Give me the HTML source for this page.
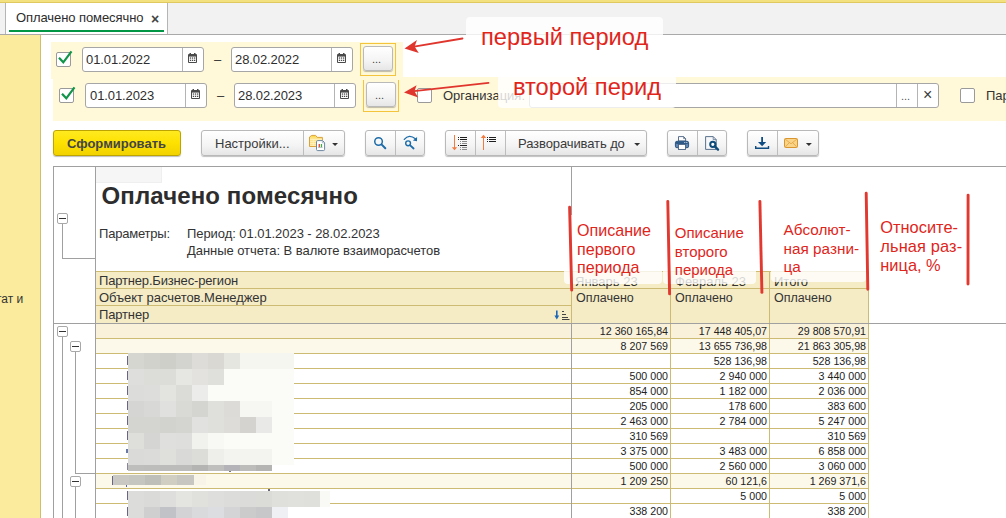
<!DOCTYPE html>
<html lang="ru">
<head>
<meta charset="utf-8">
<title>Оплачено помесячно</title>
<style>
*{box-sizing:border-box;margin:0;padding:0}
html,body{width:1006px;height:518px;overflow:hidden;background:#fff}
body{font-family:"Liberation Sans",sans-serif;font-size:13px;color:#333;position:relative}
.abs{position:absolute}
.t{position:absolute;white-space:nowrap;line-height:1}
/* top */
#topstrip{left:0;top:0;width:1006px;height:3px;background:#f3e07f;border-bottom:1px solid #e0c95e}
#tabbar{left:0;top:3px;width:1006px;height:32px;background:#f2f2f2;border-bottom:1px solid #a9a9a9}
#tab{left:5px;top:3px;width:163px;height:31px;background:#fff;border-left:1px solid #b5b5b5;border-right:1px solid #b5b5b5}
#tabline{left:9px;top:30px;width:155px;height:2px;background:#009646}
#sidebar{left:0;top:35px;width:41px;height:483px;background:#fbeb9d;border-right:1px solid #cfbf6c}
/* inputs */
.inp{position:absolute;height:25px;background:#fff;border:1px solid #a6a6a6;border-radius:3px}
.inp .sep{position:absolute;top:0;bottom:0;width:1px;background:#b4b4b4}
.chk{position:absolute;width:15px;height:15px;background:#fff;border:1px solid #9a9a9a;border-radius:2px}
.btn{position:absolute;height:26px;border:1px solid #b9b9b9;border-radius:3px;background:linear-gradient(#ffffff,#f4f4f4 60%,#e6e6e6);box-shadow:0 1px 1px rgba(0,0,0,.25)}
.btn .sep{position:absolute;top:0;bottom:0;width:1px;background:#bdbdbd}
.red{color:#e0251b}
/* report */
.hl{position:absolute;height:1px;background:#a0a0a0}
.vl{position:absolute;width:1px;background:#a0a0a0}
.num{position:absolute;font-size:10.67px;line-height:1;text-align:right;white-space:nowrap;color:#222}
</style>
</head>
<body>
<div id="topstrip" class="abs"></div>
<div id="tabbar" class="abs"></div>
<div id="tab" class="abs"></div>
<div id="tabline" class="abs"></div>
<div class="t" style="left:16px;top:11px;font-size:13px;color:#2c2c2c;letter-spacing:-0.08px">Оплачено помесячно</div>
<div class="t" style="left:151px;top:12px;font-size:14px;font-weight:bold;color:#444">×</div>
<div id="sidebar" class="abs"></div>
<div class="t" style="left:-4px;top:293px;font-size:12px;color:#333">тат и</div>

<!-- FILTERS -->
<div class="abs" style="left:53px;top:77px;width:953px;height:44px;background:#fff8d9"></div>
<div class="abs" style="left:403px;top:35px;width:603px;height:42px;background:#fff"></div>
<div class="abs" style="left:51px;top:42px;width:352px;height:37px;background:#fff8d9"></div>
<div class="chk" style="left:56px;top:52px"></div><svg class="abs" style="left:56px;top:49px" width="18" height="16" viewBox="0 0 18 16"><path d="M3 8.7 L7.3 13.3 L15.5 2.4" fill="none" stroke="#10954a" stroke-width="2.2" stroke-linejoin="miter"/></svg>
<div class="inp" style="left:82px;top:47px;width:122px"><div class="sep" style="left:99px"></div></div>
<div class="t" style="left:86px;top:53px;font-size:13px;letter-spacing:-0.1px;color:#2e2e2e">01.01.2022</div>
<svg class="abs" style="left:188px;top:53px" width="9" height="10" viewBox="0 0 9 10"><rect x="0" y="1" width="9" height="9" rx="1" fill="#4a4a4a"/><rect x="1.5" y="0" width="1.5" height="2.2" fill="#4a4a4a"/><rect x="6" y="0" width="1.5" height="2.2" fill="#4a4a4a"/><rect x="1" y="3.6" width="7" height="5.4" fill="#fff"/><g fill="#4a4a4a"><rect x="1.8" y="4.4" width="1.3" height="1.3"/><rect x="3.9" y="4.4" width="1.3" height="1.3"/><rect x="6" y="4.4" width="1.3" height="1.3"/><rect x="1.8" y="6.7" width="1.3" height="1.3"/><rect x="3.9" y="6.7" width="1.3" height="1.3"/><rect x="6" y="6.7" width="1.3" height="1.3"/></g></svg>
<div class="t" style="left:214px;top:53px;font-size:13px">–</div>
<div class="inp" style="left:231px;top:47px;width:122px"><div class="sep" style="left:99px"></div></div>
<div class="t" style="left:235px;top:53px;font-size:13px;letter-spacing:-0.1px;color:#2e2e2e">28.02.2022</div>
<svg class="abs" style="left:337px;top:53px" width="9" height="10" viewBox="0 0 9 10"><rect x="0" y="1" width="9" height="9" rx="1" fill="#4a4a4a"/><rect x="1.5" y="0" width="1.5" height="2.2" fill="#4a4a4a"/><rect x="6" y="0" width="1.5" height="2.2" fill="#4a4a4a"/><rect x="1" y="3.6" width="7" height="5.4" fill="#fff"/><g fill="#4a4a4a"><rect x="1.8" y="4.4" width="1.3" height="1.3"/><rect x="3.9" y="4.4" width="1.3" height="1.3"/><rect x="6" y="4.4" width="1.3" height="1.3"/><rect x="1.8" y="6.7" width="1.3" height="1.3"/><rect x="3.9" y="6.7" width="1.3" height="1.3"/><rect x="6" y="6.7" width="1.3" height="1.3"/></g></svg>
<div class="abs" style="left:360px;top:43px;width:36px;height:33px;border:1px solid #f3c43c"></div>
<div class="btn" style="left:363px;top:46px;width:30px;height:25px"></div>
<div class="t" style="left:372px;top:54px;font-size:11px;color:#444">...</div>
<div class="chk" style="left:59px;top:88px"></div><svg class="abs" style="left:59px;top:85px" width="18" height="16" viewBox="0 0 18 16"><path d="M3 8.7 L7.3 13.3 L15.5 2.4" fill="none" stroke="#10954a" stroke-width="2.2" stroke-linejoin="miter"/></svg>
<div class="inp" style="left:85px;top:83px;width:122px"><div class="sep" style="left:99px"></div></div>
<div class="t" style="left:90px;top:89px;font-size:13px;letter-spacing:-0.1px;color:#2e2e2e">01.01.2023</div>
<svg class="abs" style="left:191px;top:89px" width="9" height="10" viewBox="0 0 9 10"><rect x="0" y="1" width="9" height="9" rx="1" fill="#4a4a4a"/><rect x="1.5" y="0" width="1.5" height="2.2" fill="#4a4a4a"/><rect x="6" y="0" width="1.5" height="2.2" fill="#4a4a4a"/><rect x="1" y="3.6" width="7" height="5.4" fill="#fff"/><g fill="#4a4a4a"><rect x="1.8" y="4.4" width="1.3" height="1.3"/><rect x="3.9" y="4.4" width="1.3" height="1.3"/><rect x="6" y="4.4" width="1.3" height="1.3"/><rect x="1.8" y="6.7" width="1.3" height="1.3"/><rect x="3.9" y="6.7" width="1.3" height="1.3"/><rect x="6" y="6.7" width="1.3" height="1.3"/></g></svg>
<div class="t" style="left:217px;top:89px;font-size:13px">–</div>
<div class="inp" style="left:234px;top:83px;width:122px"><div class="sep" style="left:99px"></div></div>
<div class="t" style="left:238px;top:89px;font-size:13px;letter-spacing:-0.1px;color:#2e2e2e">28.02.2023</div>
<svg class="abs" style="left:340px;top:89px" width="9" height="10" viewBox="0 0 9 10"><rect x="0" y="1" width="9" height="9" rx="1" fill="#4a4a4a"/><rect x="1.5" y="0" width="1.5" height="2.2" fill="#4a4a4a"/><rect x="6" y="0" width="1.5" height="2.2" fill="#4a4a4a"/><rect x="1" y="3.6" width="7" height="5.4" fill="#fff"/><g fill="#4a4a4a"><rect x="1.8" y="4.4" width="1.3" height="1.3"/><rect x="3.9" y="4.4" width="1.3" height="1.3"/><rect x="6" y="4.4" width="1.3" height="1.3"/><rect x="1.8" y="6.7" width="1.3" height="1.3"/><rect x="3.9" y="6.7" width="1.3" height="1.3"/><rect x="6" y="6.7" width="1.3" height="1.3"/></g></svg>
<div class="abs" style="left:363px;top:80px;width:36px;height:32px;border:1px solid #f3c43c;border-top:none"></div>
<div class="btn" style="left:366px;top:82px;width:30px;height:25px"></div>
<div class="t" style="left:375px;top:90px;font-size:11px;color:#444">...</div>
<div class="chk" style="left:417px;top:88px"></div>
<div class="t" style="left:443px;top:89px;font-size:13px">Организация:</div>
<div class="inp" style="left:529px;top:83px;width:410px"><div class="sep" style="left:366px"></div><div class="sep" style="left:387px"></div></div>
<div class="t" style="left:901px;top:91px;font-size:11px;color:#555">...</div>
<div class="t" style="left:923px;top:87px;font-size:16px;color:#3c3c3c">×</div>
<div class="chk" style="left:960px;top:88px"></div>
<div class="t" style="left:986px;top:89px;font-size:13px">Пар</div>

<!-- TOOLBAR -->
<div class="abs" style="left:53px;top:130px;width:128px;height:26px;border:1px solid #bda400;border-radius:3px;background:linear-gradient(#ffea20,#fde100 50%,#f2d200);box-shadow:0 1px 1px rgba(0,0,0,.25)"></div>
<div class="t" style="left:67px;top:137px;font-size:13px;font-weight:bold;color:#454545">Сформировать</div>
<div class="btn" style="left:201px;top:130px;width:144px"><div class="sep" style="left:101px"></div></div>
<div class="t" style="left:215px;top:137px;font-size:13px;color:#3a3a3a">Настройки...</div>
<div class="btn" style="left:365px;top:130px;width:60px"><div class="sep" style="left:29px"></div></div>
<div class="btn" style="left:445px;top:130px;width:202px"><div class="sep" style="left:29px"></div><div class="sep" style="left:59px"></div></div>
<div class="t" style="left:518px;top:137px;font-size:13px;color:#3a3a3a;letter-spacing:-0.1px">Разворачивать до</div>
<div class="btn" style="left:667px;top:130px;width:60px"><div class="sep" style="left:29px"></div></div>
<div class="btn" style="left:747px;top:130px;width:72px"><div class="sep" style="left:29px"></div></div>
<svg class="abs" style="left:0;top:0" width="1006" height="518" viewBox="0 0 1006 518">
<!-- folder + doc -->
<path d="M309.5 146.5 L309.5 137 L311.9 135.4 L315.6 135.4 L317.2 137.4 L322.4 137.4 L322.4 146.5 Z" fill="#fde38c" stroke="#dba13a" stroke-width="1"/>
<path d="M310.3 137.2 L312.1 136 L315.3 136 L316.4 137.6 Z" fill="#fbdc4e"/>
<g stroke="#fff3c4" stroke-width="0.7"><path d="M310.2 139.5H322M310.2 141.5H322M310.2 143.5H322M310.2 145.3H322"/><path d="M313.3 139V146" /></g>
<path d="M316.5 141.8 Q316.5 140.6 317.7 140.6 L322.6 140.6 L324.6 142.6 L324.6 149.4 Q324.6 150.6 323.4 150.6 L317.7 150.6 Q316.5 150.6 316.5 149.4 Z" fill="#fff" stroke="#6c879e" stroke-width="1"/>
<path d="M322.4 140.8 L322.4 142.8 L324.4 142.8" fill="none" stroke="#8fa5b8" stroke-width="0.7"/>
<rect x="318.6" y="144" width="1.3" height="3.3" fill="#f0382c"/><rect x="320.8" y="144" width="1.3" height="3.3" fill="#36b24a"/>
<rect x="318" y="147.3" width="4.6" height="0.6" fill="#9aa"/>
<!-- dropdown arrows -->
<path d="M332.1 143 L338 143 L335.05 145.9 Z" fill="#333"/>
<path d="M634.2 143 L640.1 143 L637.15 145.9 Z" fill="#333"/>
<path d="M805.9 143 L811.9 143 L808.9 146 Z" fill="#333"/>
<!-- magnifier -->
<circle cx="378.55" cy="141.5" r="3.8" fill="none" stroke="#1d6ca8" stroke-width="1.5"/>
<path d="M381.5 144.4 L385.3 148.2" stroke="#1d6ca8" stroke-width="2" stroke-linecap="round"/>
<!-- magnifier w/ arrow -->
<circle cx="408.1" cy="143.3" r="2.4" fill="none" stroke="#1d6ca8" stroke-width="1.4"/>
<path d="M410.2 145.3 L413.6 148.5" stroke="#1d6ca8" stroke-width="1.8" stroke-linecap="round"/>
<path d="M404.3 139.4 Q409 133.6 415.4 138.8" fill="none" stroke="#1d6ca8" stroke-width="1.3" stroke-linecap="round"/>
<path d="M417.1 137 L417 141.2 L412.9 140.5 Z" fill="#1d6ca8"/>
<!-- expand/collapse -->
<g shape-rendering="crispEdges">
<rect x="454" y="135" width="1" height="13" fill="#f47b3f"/>
<rect x="483" y="137" width="1" height="13" fill="#f47b3f"/>
<g fill="#1e1e1e"><rect x="458" y="137" width="1" height="1"/><rect x="460" y="137" width="7" height="1"/><rect x="458" y="139" width="1" height="1"/><rect x="460" y="139" width="7" height="1"/><rect x="458" y="145" width="1" height="1"/><rect x="460" y="145" width="7" height="1"/>
<rect x="487" y="137" width="1" height="1"/><rect x="489" y="137" width="7" height="1"/><rect x="487" y="139" width="1" height="1"/><rect x="489" y="139" width="7" height="1"/><rect x="487" y="141" width="1" height="1"/><rect x="489" y="141" width="7" height="1"/></g>
<g fill="#8c8c8c"><rect x="460" y="141" width="1" height="1"/><rect x="462" y="141" width="5" height="1"/><rect x="460" y="143" width="1" height="1"/><rect x="462" y="143" width="5" height="1"/><rect x="460" y="147" width="1" height="1"/><rect x="462" y="147" width="5" height="1"/><rect x="460" y="149" width="1" height="1"/><rect x="462" y="149" width="5" height="1"/></g>
</g>
<path d="M451.8 147.2 L457.2 147.2 L454.5 150.2 Z" fill="#f47b3f"/>
<path d="M480.8 138 L486.2 138 L483.5 134.8 Z" fill="#f47b3f"/>
<!-- printer -->
<path d="M678.5 141 L678.5 136.6 L683.6 136.6 L685.6 138.6 L685.6 141 Z" fill="#fff" stroke="#46607e" stroke-width="0.9"/>
<path d="M683.6 136.6 L683.6 138.6 L685.6 138.6" fill="none" stroke="#46607e" stroke-width="0.7"/>
<rect x="675.4" y="141.3" width="13.2" height="6.4" rx="1.5" fill="#5f88b6" stroke="#204b77" stroke-width="0.9"/>
<rect x="675.9" y="141.7" width="12.2" height="2.2" rx="1" fill="#2e5a88"/>
<rect x="684.3" y="142" width="1" height="0.9" fill="#e8f0f8"/><rect x="686.3" y="142" width="1" height="0.9" fill="#e8f0f8"/>
<rect x="678.5" y="144.4" width="7" height="5.1" fill="#fff" stroke="#46607e" stroke-width="0.9"/>
<!-- preview -->
<path d="M705.6 136.6 L713.2 136.6 L716.2 139.6 L716.2 149.4 L705.6 149.4 Z" fill="#f6f8fa" stroke="#4a6482" stroke-width="0.9"/>
<path d="M713.2 136.6 L713.2 139.6 L716.2 139.6" fill="none" stroke="#4a6482" stroke-width="0.7"/>
<circle cx="712.8" cy="144.3" r="2.6" fill="#fff" stroke="#0e4c7a" stroke-width="2"/>
<path d="M715 146.6 L718 149.6" stroke="#0e4c7a" stroke-width="2.4" stroke-linecap="round"/>
<!-- download -->
<path d="M762.1 137.1 L762.1 143" stroke="#0f4c81" stroke-width="1.8"/>
<path d="M758 142.1 L766.2 142.1 L762.1 146.2 Z" fill="#0f4c81"/>
<path d="M755.7 146.1 L755.7 148.2 L768.5 148.2 L768.5 146.1" fill="none" stroke="#0f4c81" stroke-width="1.4"/>
<!-- envelope -->
<rect x="784.5" y="138.5" width="13" height="9" rx="1" fill="#fad489" stroke="#d9962e" stroke-width="1"/>
<path d="M785 139 L791 143.8 L797 139 M785.2 147 L789.4 142.6 M796.8 147 L792.6 142.6" fill="none" stroke="#e0a242" stroke-width="0.8"/>
</svg>
<!-- REPORT -->
<div class="abs" style="left:96px;top:271px;width:773px;height:52px;background:#f5ecc6"></div>
<div class="abs" style="left:96px;top:324px;width:773px;height:14px;background:#f9f1d9"></div>
<div class="abs" style="left:96px;top:339px;width:773px;height:14px;background:#fdf9ea"></div>
<div class="abs" style="left:96px;top:474px;width:773px;height:14px;background:#fdf9ea"></div>
<div class="abs" style="left:96px;top:271px;width:773px;height:1px;background:#cdbb73"></div>
<div class="abs" style="left:96px;top:288px;width:773px;height:1px;background:#cdbb73"></div>
<div class="abs" style="left:96px;top:305px;width:475px;height:1px;background:#cdbb73"></div>
<div class="abs" style="left:96px;top:338px;width:773px;height:1px;background:#cdbb73"></div>
<div class="abs" style="left:96px;top:353px;width:773px;height:1px;background:#cdbb73"></div>
<div class="abs" style="left:96px;top:368px;width:773px;height:1px;background:#cdbb73"></div>
<div class="abs" style="left:96px;top:383px;width:773px;height:1px;background:#cdbb73"></div>
<div class="abs" style="left:96px;top:398px;width:773px;height:1px;background:#cdbb73"></div>
<div class="abs" style="left:96px;top:413px;width:773px;height:1px;background:#cdbb73"></div>
<div class="abs" style="left:96px;top:428px;width:773px;height:1px;background:#cdbb73"></div>
<div class="abs" style="left:96px;top:443px;width:773px;height:1px;background:#cdbb73"></div>
<div class="abs" style="left:96px;top:458px;width:773px;height:1px;background:#cdbb73"></div>
<div class="abs" style="left:96px;top:473px;width:773px;height:1px;background:#cdbb73"></div>
<div class="abs" style="left:96px;top:488px;width:773px;height:1px;background:#cdbb73"></div>
<div class="abs" style="left:96px;top:503px;width:773px;height:1px;background:#cdbb73"></div>
<div class="abs" style="left:571px;top:271px;width:1px;height:247px;background:#cdbb73"></div>
<div class="abs" style="left:670px;top:271px;width:1px;height:247px;background:#cdbb73"></div>
<div class="abs" style="left:769px;top:271px;width:1px;height:247px;background:#cdbb73"></div>
<div class="abs" style="left:868px;top:271px;width:1px;height:247px;background:#cdbb73"></div>
<div class="hl" style="left:53px;top:166px;width:953px"></div>
<div class="vl" style="left:53px;top:166px;height:352px"></div>
<div class="vl" style="left:95px;top:166px;height:352px"></div>
<div class="vl" style="left:571px;top:166px;height:105px"></div>
<div class="vl" style="left:571px;top:323px;height:195px"></div>
<div class="hl" style="left:53px;top:323px;width:953px"></div>
<div class="abs" style="left:96px;top:167px;width:66px;height:16px;background:#f6f6f6;border-bottom:1px solid #efefef;border-right:1px solid #efefef"></div>
<div class="t" style="left:101.5px;top:184px;font-size:24px;font-weight:bold;color:#2d2d2d;letter-spacing:0.12px">Оплачено помесячно</div>
<div class="t" style="left:99px;top:227px;font-size:13px;color:#333;letter-spacing:-0.2px">Параметры:</div>
<div class="t" style="left:187px;top:227px;font-size:13px;color:#333;letter-spacing:-0.06px">Период: 01.01.2023 - 28.02.2023</div>
<div class="t" style="left:187px;top:244px;font-size:13px;color:#333;letter-spacing:-0.05px">Данные отчета: В валюте взаиморасчетов</div>
<div class="t" style="left:99px;top:274px;font-size:13px;color:#333;letter-spacing:-0.17px">Партнер.Бизнес-регион</div>
<div class="t" style="left:99px;top:291px;font-size:13px;color:#333;letter-spacing:-0.05px">Объект расчетов.Менеджер</div>
<div class="t" style="left:99px;top:308px;font-size:13px;color:#333;letter-spacing:-0.15px">Партнер</div>
<div class="t" style="left:575px;top:275px;font-size:13px;color:#333">Январь 23</div>
<div class="t" style="left:675px;top:275px;font-size:13px;color:#333">Февраль 23</div>
<div class="t" style="left:774px;top:275px;font-size:13px;color:#333">Итого</div>
<div class="t" style="left:576px;top:292px;font-size:12.5px;color:#333">Оплачено</div>
<div class="t" style="left:675px;top:292px;font-size:12.5px;color:#333">Оплачено</div>
<div class="t" style="left:774px;top:292px;font-size:12.5px;color:#333">Оплачено</div>
<svg class="abs" style="left:554px;top:310px" width="17" height="11" viewBox="0 0 17 11"><path d="M2.8 0.5 L2.8 7" stroke="#1a66b8" stroke-width="1.6"/><path d="M0.4 5.6 L5.2 5.6 L2.8 9.6 Z" fill="#1a66b8"/><g fill="#444"><rect x="8" y="1" width="2" height="1"/><rect x="8" y="4" width="4" height="1"/><rect x="8" y="7" width="6" height="1"/><rect x="8" y="9" width="7.5" height="1"/></g></svg>
<div class="vl" style="left:62px;top:224px;height:34px"></div>
<div class="hl" style="left:62px;top:258px;width:33px"></div>
<div class="abs" style="left:57px;top:213px;width:11px;height:11px;border:1px solid #a8a8a8;border-radius:2px;background:#fff"></div><div class="abs" style="left:59px;top:218px;width:7px;height:1px;background:#333"></div>
<div class="vl" style="left:62px;top:337px;height:181px"></div>
<div class="abs" style="left:57px;top:326px;width:11px;height:11px;border:1px solid #a8a8a8;border-radius:2px;background:#fff"></div><div class="abs" style="left:59px;top:331px;width:7px;height:1px;background:#333"></div>
<div class="vl" style="left:75px;top:352px;height:122px"></div>
<div class="hl" style="left:75px;top:473px;width:20px"></div>
<div class="abs" style="left:70px;top:341px;width:11px;height:11px;border:1px solid #a8a8a8;border-radius:2px;background:#fff"></div><div class="abs" style="left:72px;top:346px;width:7px;height:1px;background:#333"></div>
<div class="vl" style="left:75px;top:487px;height:31px"></div>
<div class="abs" style="left:70px;top:476px;width:11px;height:11px;border:1px solid #a8a8a8;border-radius:2px;background:#fff"></div><div class="abs" style="left:72px;top:481px;width:7px;height:1px;background:#333"></div>
<div class="num" style="left:573px;top:326px;width:95px">12 360 165,84</div>
<div class="num" style="left:672px;top:326px;width:95px">17 448 405,07</div>
<div class="num" style="left:771px;top:326px;width:95px">29 808 570,91</div>
<div class="num" style="left:573px;top:341px;width:95px">8 207 569</div>
<div class="num" style="left:672px;top:341px;width:95px">13 655 736,98</div>
<div class="num" style="left:771px;top:341px;width:95px">21 863 305,98</div>
<div class="num" style="left:672px;top:356px;width:95px">528 136,98</div>
<div class="num" style="left:771px;top:356px;width:95px">528 136,98</div>
<div class="num" style="left:573px;top:371px;width:95px">500 000</div>
<div class="num" style="left:672px;top:371px;width:95px">2 940 000</div>
<div class="num" style="left:771px;top:371px;width:95px">3 440 000</div>
<div class="num" style="left:573px;top:386px;width:95px">854 000</div>
<div class="num" style="left:672px;top:386px;width:95px">1 182 000</div>
<div class="num" style="left:771px;top:386px;width:95px">2 036 000</div>
<div class="num" style="left:573px;top:401px;width:95px">205 000</div>
<div class="num" style="left:672px;top:401px;width:95px">178 600</div>
<div class="num" style="left:771px;top:401px;width:95px">383 600</div>
<div class="num" style="left:573px;top:416px;width:95px">2 463 000</div>
<div class="num" style="left:672px;top:416px;width:95px">2 784 000</div>
<div class="num" style="left:771px;top:416px;width:95px">5 247 000</div>
<div class="num" style="left:573px;top:431px;width:95px">310 569</div>
<div class="num" style="left:771px;top:431px;width:95px">310 569</div>
<div class="num" style="left:573px;top:446px;width:95px">3 375 000</div>
<div class="num" style="left:672px;top:446px;width:95px">3 483 000</div>
<div class="num" style="left:771px;top:446px;width:95px">6 858 000</div>
<div class="num" style="left:573px;top:461px;width:95px">500 000</div>
<div class="num" style="left:672px;top:461px;width:95px">2 560 000</div>
<div class="num" style="left:771px;top:461px;width:95px">3 060 000</div>
<div class="num" style="left:573px;top:476px;width:95px">1 209 250</div>
<div class="num" style="left:672px;top:476px;width:95px">60 121,6</div>
<div class="num" style="left:771px;top:476px;width:95px">1 269 371,6</div>
<div class="num" style="left:672px;top:491px;width:95px">5 000</div>
<div class="num" style="left:771px;top:491px;width:95px">5 000</div>
<div class="num" style="left:573px;top:506px;width:95px">338 200</div>
<div class="num" style="left:771px;top:506px;width:95px">338 200</div>
<!-- MOSAIC -->
<div class="abs" style="left:126px;top:356px;width:1px;height:9px;background:#6a6485;margin-left:1px"></div>
<div class="abs" style="left:126px;top:371px;width:1px;height:9px;background:#6a6485;margin-left:1px"></div>
<div class="abs" style="left:126px;top:386px;width:1px;height:9px;background:#6a6485;margin-left:1px"></div>
<div class="abs" style="left:126px;top:401px;width:1px;height:9px;background:#6a6485;margin-left:1px"></div>
<div class="abs" style="left:126px;top:416px;width:1px;height:9px;background:#6a6485;margin-left:1px"></div>
<div class="abs" style="left:126px;top:431px;width:1px;height:9px;background:#6a6485;margin-left:1px"></div>
<div class="abs" style="left:126px;top:449px;width:2px;height:4px;background:#6a78a8"></div>
<div class="abs" style="left:127px;top:463px;width:1px;height:7px;background:#8a86a0"></div><div class="abs" style="left:126px;top:485px;width:1px;height:2px;background:#5566aa"></div>
<div class="abs" style="left:126px;top:491px;width:1px;height:9px;background:#6a6485;margin-left:1px"></div>
<div class="abs" style="left:126px;top:507px;width:1px;height:9px;background:#6a6485;margin-left:1px"></div>
<div class="abs" style="left:111px;top:476px;width:1px;height:9px;background:#6a6485;margin-left:1px"></div>
<div class="abs" style="left:229px;top:470px;width:2px;height:2px;background:#777"></div>
<div class="abs" style="left:268px;top:489px;width:2px;height:2px;background:#667"></div>
<svg class="abs" style="left:128px;top:353px" width="166" height="118" viewBox="0 0 166 118" shape-rendering="crispEdges"><rect x="0" y="0" width="16" height="16" fill="#d6d6d1"/><rect x="16" y="0" width="16" height="16" fill="#d2d2cd"/><rect x="32" y="0" width="16" height="16" fill="#cfcfca"/><rect x="48" y="0" width="16" height="16" fill="#d3d3cf"/><rect x="64" y="0" width="16" height="16" fill="#dddcd8"/><rect x="80" y="0" width="16" height="16" fill="#dad8d3"/><rect x="96" y="0" width="16" height="16" fill="#e6e6e1"/><rect x="112" y="0" width="16" height="16" fill="#f6f6f0"/><rect x="128" y="0" width="16" height="16" fill="#f6f6f0"/><rect x="144" y="0" width="16" height="16" fill="#f6f6f0"/><rect x="160" y="0" width="6" height="16" fill="#f6f6f0"/><rect x="0" y="16" width="16" height="16" fill="#dedfdc"/><rect x="16" y="16" width="16" height="16" fill="#dcdcd9"/><rect x="32" y="16" width="16" height="16" fill="#dcdcd8"/><rect x="48" y="16" width="16" height="16" fill="#e6e7e3"/><rect x="64" y="16" width="16" height="16" fill="#e4e2de"/><rect x="80" y="16" width="16" height="16" fill="#dfdfdb"/><rect x="96" y="16" width="16" height="16" fill="#fbfcf8"/><rect x="112" y="16" width="16" height="16" fill="#fbfcf8"/><rect x="128" y="16" width="16" height="16" fill="#fbfcf8"/><rect x="144" y="16" width="16" height="16" fill="#fbfcf8"/><rect x="160" y="16" width="6" height="16" fill="#fbfcf8"/><rect x="0" y="32" width="16" height="16" fill="#dcdddb"/><rect x="16" y="32" width="16" height="16" fill="#dddedb"/><rect x="32" y="32" width="16" height="16" fill="#e3e3df"/><rect x="48" y="32" width="16" height="16" fill="#dbdbd8"/><rect x="64" y="32" width="16" height="16" fill="#ececea"/><rect x="80" y="32" width="16" height="16" fill="#fbfcf8"/><rect x="96" y="32" width="16" height="16" fill="#fbfcf8"/><rect x="112" y="32" width="16" height="16" fill="#fbfcf8"/><rect x="128" y="32" width="16" height="16" fill="#fbfcf8"/><rect x="144" y="32" width="16" height="16" fill="#fbfcf8"/><rect x="160" y="32" width="6" height="16" fill="#fbfcf8"/><rect x="0" y="48" width="16" height="16" fill="#d5d6d3"/><rect x="16" y="48" width="16" height="16" fill="#d8d9d6"/><rect x="32" y="48" width="16" height="16" fill="#e0e1de"/><rect x="48" y="48" width="16" height="16" fill="#d9dad6"/><rect x="64" y="48" width="16" height="16" fill="#d4d5d1"/><rect x="80" y="48" width="16" height="16" fill="#dfdfdb"/><rect x="96" y="48" width="16" height="16" fill="#dcdbd7"/><rect x="112" y="48" width="16" height="16" fill="#f6f7f3"/><rect x="128" y="48" width="16" height="16" fill="#f6f7f3"/><rect x="144" y="48" width="16" height="16" fill="#fbfcf8"/><rect x="160" y="48" width="6" height="16" fill="#fbfcf8"/><rect x="0" y="64" width="16" height="16" fill="#d4d4d1"/><rect x="16" y="64" width="16" height="16" fill="#d4d4d1"/><rect x="32" y="64" width="16" height="16" fill="#d2d2ce"/><rect x="48" y="64" width="16" height="16" fill="#d4d5d1"/><rect x="64" y="64" width="16" height="16" fill="#e1e2df"/><rect x="80" y="64" width="16" height="16" fill="#dfe0dc"/><rect x="96" y="64" width="16" height="16" fill="#dddcd8"/><rect x="112" y="64" width="16" height="16" fill="#d4d3d0"/><rect x="128" y="64" width="16" height="16" fill="#e9e9e7"/><rect x="144" y="64" width="16" height="16" fill="#fbfcf8"/><rect x="160" y="64" width="6" height="16" fill="#fbfcf8"/><rect x="0" y="80" width="16" height="16" fill="#dedfdb"/><rect x="16" y="80" width="16" height="16" fill="#d5d6d4"/><rect x="32" y="80" width="16" height="16" fill="#dfe0dd"/><rect x="48" y="80" width="16" height="16" fill="#dedfdc"/><rect x="64" y="80" width="16" height="16" fill="#f1f1ed"/><rect x="80" y="80" width="16" height="16" fill="#f8f9f5"/><rect x="96" y="80" width="16" height="16" fill="#fbfcf8"/><rect x="112" y="80" width="16" height="16" fill="#fbfcf8"/><rect x="128" y="80" width="16" height="16" fill="#fbfcf8"/><rect x="144" y="80" width="16" height="16" fill="#fbfcf8"/><rect x="160" y="80" width="6" height="16" fill="#fbfcf8"/><rect x="0" y="96" width="16" height="16" fill="#dadbd8"/><rect x="16" y="96" width="16" height="16" fill="#dbdcd9"/><rect x="32" y="96" width="16" height="16" fill="#dfe0dc"/><rect x="48" y="96" width="16" height="16" fill="#d9dad8"/><rect x="64" y="96" width="16" height="16" fill="#dcddd9"/><rect x="80" y="96" width="16" height="16" fill="#eeefeb"/><rect x="96" y="96" width="16" height="16" fill="#f3f4f0"/><rect x="112" y="96" width="16" height="16" fill="#f3f4f0"/><rect x="128" y="96" width="16" height="16" fill="#f3f4f0"/><rect x="144" y="96" width="16" height="16" fill="#fbfcf8"/><rect x="160" y="96" width="6" height="16" fill="#fbfcf8"/><rect x="0" y="112" width="16" height="6" fill="#bebebc"/><rect x="16" y="112" width="16" height="6" fill="#bdbdbb"/><rect x="32" y="112" width="16" height="6" fill="#bcbcbb"/><rect x="48" y="112" width="16" height="6" fill="#bcbcba"/><rect x="64" y="112" width="16" height="6" fill="#b4b4b2"/><rect x="80" y="112" width="16" height="6" fill="#bfbfbd"/><rect x="96" y="112" width="16" height="6" fill="#b4b3b8"/><rect x="112" y="112" width="16" height="6" fill="#bcbcba"/><rect x="128" y="112" width="16" height="6" fill="#b4b4b2"/></svg>
<svg class="abs" style="left:113px;top:475px" width="93" height="10" viewBox="0 0 93 10" shape-rendering="crispEdges"><rect x="0" y="0" width="16" height="10" fill="#c9c8c3"/><rect x="16" y="0" width="16" height="10" fill="#c6c6c1"/><rect x="32" y="0" width="16" height="10" fill="#bfbfb9"/><rect x="48" y="0" width="16" height="10" fill="#d0cdc3"/><rect x="64" y="0" width="17" height="10" fill="#c7c6c0"/><rect x="81" y="0" width="12" height="10" fill="#f8f5e8"/></svg>
<svg class="abs" style="left:128px;top:491px" width="202" height="16" viewBox="0 0 202 16" shape-rendering="crispEdges"><rect x="0" y="0" width="16" height="16" fill="#dcdcda"/><rect x="16" y="0" width="16" height="16" fill="#dadad8"/><rect x="32" y="0" width="16" height="16" fill="#dededc"/><rect x="48" y="0" width="16" height="16" fill="#e4e4e1"/><rect x="64" y="0" width="16" height="16" fill="#e0e0dd"/><rect x="80" y="0" width="16" height="16" fill="#dedfdc"/><rect x="96" y="0" width="16" height="16" fill="#dcdcda"/><rect x="112" y="0" width="16" height="16" fill="#dbdbd9"/><rect x="128" y="0" width="16" height="16" fill="#dbdbd8"/><rect x="144" y="0" width="16" height="16" fill="#dfdfdc"/><rect x="160" y="0" width="16" height="16" fill="#e0e0dd"/><rect x="176" y="0" width="16" height="16" fill="#dfdfdc"/><rect x="192" y="0" width="10" height="16" fill="#f9faf5"/></svg>
<svg class="abs" style="left:128px;top:507px" width="160" height="11" viewBox="0 0 160 11" shape-rendering="crispEdges"><rect x="0" y="0" width="16" height="11" fill="#dcdcdb"/><rect x="16" y="0" width="16" height="11" fill="#cfcfd0"/><rect x="32" y="0" width="16" height="11" fill="#c1c1c8"/><rect x="48" y="0" width="16" height="11" fill="#d3d3d5"/><rect x="64" y="0" width="16" height="11" fill="#d9dadc"/><rect x="80" y="0" width="16" height="11" fill="#dcdde0"/><rect x="96" y="0" width="16" height="11" fill="#d4d4d6"/><rect x="112" y="0" width="16" height="11" fill="#cbcbcc"/><rect x="128" y="0" width="16" height="11" fill="#c7c7c9"/><rect x="144" y="0" width="16" height="11" fill="#eff0f4"/></svg>


<!-- ANNOT -->
<div class="abs" style="left:466px;top:17px;width:197px;height:40px;background:rgba(255,255,255,.8);border-radius:4px"></div>
<div class="abs" style="left:498px;top:75px;width:178px;height:33px;background:rgba(255,255,255,.8);border-radius:4px"></div>
<div class="abs" style="left:564px;top:215px;width:98px;height:69px;background:rgba(255,255,255,.8);border-radius:4px"></div>
<div class="abs" style="left:663px;top:215px;width:93px;height:69px;background:rgba(255,255,255,.8);border-radius:4px"></div>
<div class="abs" style="left:771px;top:215px;width:95px;height:67px;background:rgba(255,255,255,.8);border-radius:4px"></div>
<div class="t red" style="left:481px;top:26.2px;font-size:23.66px">первый период</div>
<div class="t red" style="left:513px;top:76.2px;font-size:23.66px">второй перид</div>
<div class="t red" style="left:577px;top:222.25px;font-size:16.1px">Описание</div>
<div class="t red" style="left:577px;top:240.55px;font-size:16.1px">первого</div>
<div class="t red" style="left:577px;top:258.85px;font-size:16.1px">периода</div>
<div class="t red" style="left:674.8px;top:225.4px;font-size:15.0px">Описание</div>
<div class="t red" style="left:674.8px;top:243.5px;font-size:15.0px">второго</div>
<div class="t red" style="left:674.8px;top:261.6px;font-size:15.0px">периода</div>
<div class="t red" style="left:783.6px;top:222.34px;font-size:15.3px">Абсолют-</div>
<div class="t red" style="left:783.6px;top:240.59px;font-size:15.3px">ная разни-</div>
<div class="t red" style="left:783.6px;top:258.84px;font-size:15.3px">ца</div>
<div class="t red" style="left:880.3px;top:218.6px;font-size:16.4px">Относите-</div>
<div class="t red" style="left:880.3px;top:237.7px;font-size:16.4px;letter-spacing:0.12px">льная раз-</div>
<div class="t red" style="left:880.3px;top:256.8px;font-size:16.4px">ница, %</div>
<svg class="abs" style="left:0;top:0" width="1006" height="518" viewBox="0 0 1006 518"><g stroke="#e1382f" stroke-width="2.9" stroke-linecap="round" fill="none">
<path d="M569.6 207.3 L571.7 290.1"/>
<path d="M667.8 201.4 L669.6 293.9"/>
<path d="M759.9 201.4 L761.9 292.4"/>
<path d="M866.2 193.2 L867.8 289.2"/>
<path d="M968.1 195.1 L968 284.1"/>
</g>
<g stroke="#e0352d" stroke-width="1.8" stroke-linecap="round" fill="none">
<path d="M462.5 38.5 L414 46.6"/>
<path d="M488.5 82.8 L414 91.2"/>
</g>
<g fill="#e0352d">
<path d="M404.5 48.4 L417 40 L414.6 46.6 L418.8 53 Z"/>
<path d="M404 92.6 L416.6 85.2 L414.4 91.2 L418.2 97.6 Z"/>
</g></svg>
</body>
</html>
